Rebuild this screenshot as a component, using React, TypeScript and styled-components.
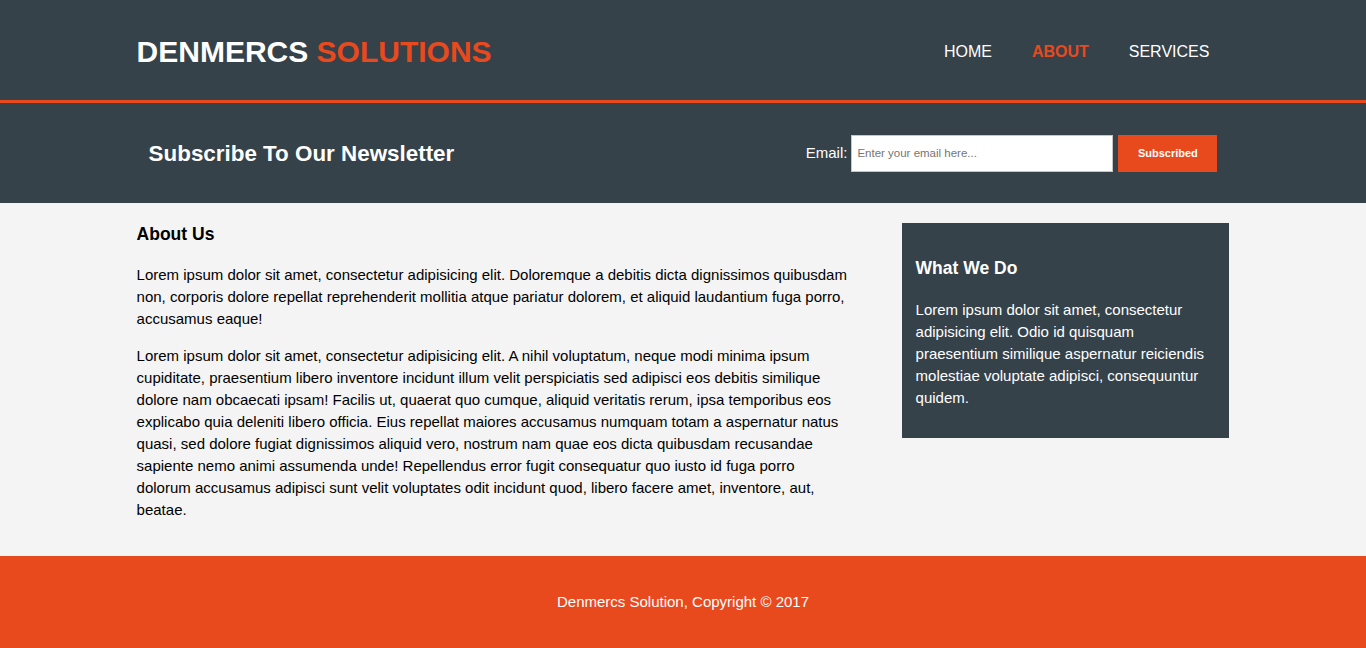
import styled, { createGlobalStyle } from 'styled-components'

const dark = '#35424a'
const orange = '#e8491d'

const GlobalStyle = createGlobalStyle`
  body {
    margin: 0;
    padding: 0;
    background: #f4f4f4;
    font-family: "Liberation Sans", Arial, Helvetica, sans-serif;
    font-size: 15px;
    line-height: 22px;
    color: #000;
  }
  * { box-sizing: border-box; }
`

const Container = styled.div`
  width: 80%;
  margin: 0 auto;
`

const Header = styled.header`
  background: ${dark};
  border-bottom: 3px solid ${orange};
`

const HeaderInner = styled(Container)`
  height: 100px;
  padding-top: 4px;
  display: flex;
  align-items: center;
  justify-content: space-between;
`

const Brand = styled.h1`
  margin: 0;
  font-size: 30px;
  line-height: 36px;
  font-weight: bold;
  color: #fff;
  text-transform: uppercase;
`

const Highlight = styled.span`
  color: ${orange};
`

const Nav = styled.ul`
  display: flex;
  margin: 0;
  padding: 0;
  list-style: none;
`

const NavItem = styled.li<{ $current?: boolean }>`
  padding: 0 20px;
  font-size: 16px;
  line-height: 24px;
  text-transform: uppercase;
  color: ${p => (p.$current ? orange : '#fff')};
  font-weight: ${p => (p.$current ? 'bold' : 'normal')};

  a {
    color: inherit;
    text-decoration: none;
  }
`

const Newsletter = styled.section`
  background: ${dark};
  color: #fff;
`

const NewsletterInner = styled(Container)`
  height: 100px;
  padding: 0 12px;
  display: flex;
  align-items: center;
  justify-content: space-between;
`

const NewsTitle = styled.h1`
  margin: 2px 0 0;
  font-size: 22.4px;
  line-height: 28px;
  font-weight: bold;
`

const Form = styled.form`
  display: flex;
  align-items: center;
`

const Label = styled.label`
  font-size: 15px;
  margin-right: 4px;
`

const EmailInput = styled.input`
  width: 262px;
  height: 37px;
  padding: 0 5px;
  border: 1px solid #c6c6c6;
  font-family: "Liberation Sans", Arial, sans-serif;
  font-size: 11.5px;
  color: #333;
  outline: none;

  &::placeholder {
    color: #757575;
  }
`

const SubmitButton = styled.button`
  margin-left: 5px;
  width: 99px;
  height: 37px;
  border: none;
  background: ${orange};
  color: #fff;
  font-family: "Liberation Sans", Arial, sans-serif;
  font-size: 11px;
  font-weight: bold;
`

const Main = styled(Container)`
  display: flex;
  justify-content: space-between;
  align-items: flex-start;
  padding: 20px 0;
`

const Article = styled.article`
  width: 65.3%;
`

const SectionTitle = styled.h1<{ $light?: boolean }>`
  margin: 0 0 19px;
  font-size: 17.5px;
  line-height: 22px;
  font-weight: bold;
  color: ${p => (p.$light ? '#fff' : '#000')};
`

const Para = styled.p`
  margin: 0 0 15px;
`

const Aside = styled.aside`
  width: 30%;
  background: ${dark};
  color: #fff;
  padding: 34px 14px 14px;

  ${SectionTitle} {
    margin-bottom: 20px;
  }
`

const Footer = styled.footer`
  background: ${orange};
  color: #fff;
  text-align: center;
  padding: 35px 0;
`

export default function App() {
  return (
    <>
      <GlobalStyle />
      <Header>
        <HeaderInner>
          <Brand>
            Denmercs <Highlight>Solutions</Highlight>
          </Brand>
          <Nav>
            <NavItem><a href="#">Home</a></NavItem>
            <NavItem $current><a href="#">About</a></NavItem>
            <NavItem><a href="#">Services</a></NavItem>
          </Nav>
        </HeaderInner>
      </Header>

      <Newsletter>
        <NewsletterInner>
          <NewsTitle>Subscribe To Our Newsletter</NewsTitle>
          <Form onSubmit={e => e.preventDefault()}>
            <Label>Email:</Label>
            <EmailInput type="email" placeholder="Enter your email here..." />
            <SubmitButton type="submit">Subscribed</SubmitButton>
          </Form>
        </NewsletterInner>
      </Newsletter>

      <Main>
        <Article>
          <SectionTitle>About Us</SectionTitle>
          <Para>
            Lorem ipsum dolor sit amet, consectetur adipisicing elit. Doloremque a debitis dicta dignissimos quibusdam non, corporis dolore repellat reprehenderit mollitia atque pariatur dolorem, et aliquid laudantium fuga porro, accusamus eaque!
          </Para>
          <Para>
            Lorem ipsum dolor sit amet, consectetur adipisicing elit. A nihil voluptatum, neque modi minima ipsum cupiditate, praesentium libero inventore incidunt illum velit perspiciatis sed adipisci eos debitis similique dolore nam obcaecati ipsam! Facilis ut, quaerat quo cumque, aliquid veritatis rerum, ipsa temporibus eos explicabo quia deleniti libero officia. Eius repellat maiores accusamus numquam totam a aspernatur natus quasi, sed dolore fugiat dignissimos aliquid vero, nostrum nam quae eos dicta quibusdam recusandae sapiente nemo animi assumenda unde! Repellendus error fugit consequatur quo iusto id fuga porro dolorum accusamus adipisci sunt velit voluptates odit incidunt quod, libero facere amet, inventore, aut, beatae.
          </Para>
        </Article>
        <Aside>
          <SectionTitle $light>What We Do</SectionTitle>
          <Para>
            Lorem ipsum dolor sit amet, consectetur adipisicing elit. Odio id quisquam praesentium similique aspernatur reiciendis molestiae voluptate adipisci, consequuntur quidem.
          </Para>
        </Aside>
      </Main>

      <Footer>Denmercs Solution, Copyright &copy; 2017</Footer>
    </>
  )
}
